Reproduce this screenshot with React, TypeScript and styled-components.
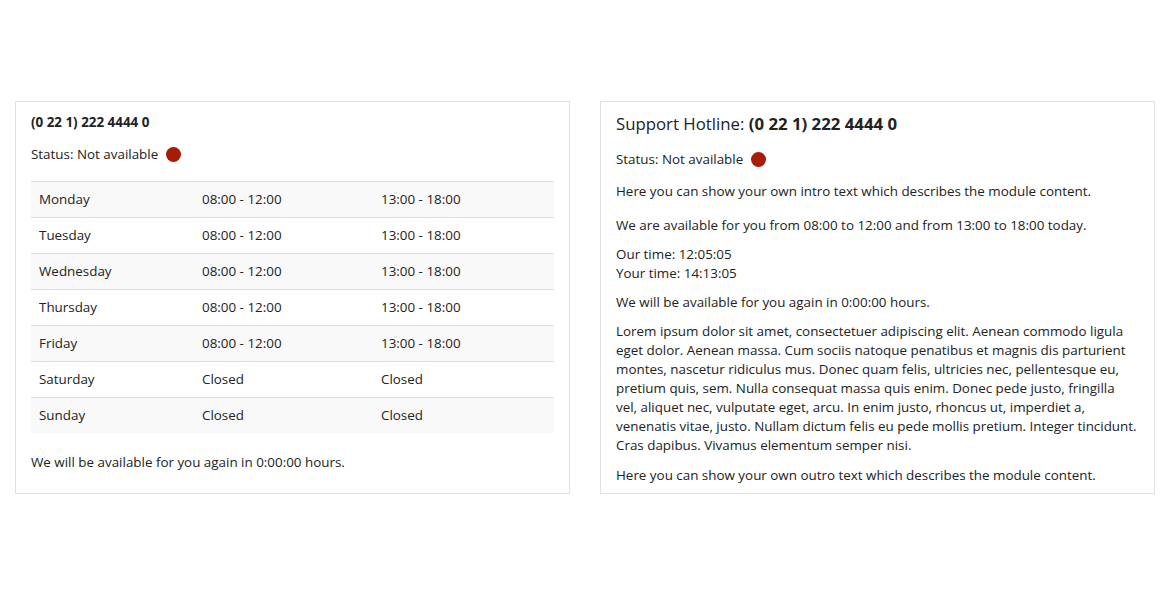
import React from "react";
import styled, { createGlobalStyle } from "styled-components";

const GlobalStyle = createGlobalStyle`
  body {
    margin: 0;
    background: #fff;
    font-family: "Open Sans", "Liberation Sans", sans-serif;
    font-size: 13.4px;
    line-height: 19px;
    color: #222;
  }
`;

const Page = styled.div`
  display: flex;
  align-items: stretch;
  gap: 30px;
  padding: 101px 15px 0;
`;

const Panel = styled.section`
  flex: 1;
  border: 1px solid #e1e1e1;
  padding: 11px 15px 8px;
`;

const Phone = styled.div`
  font-weight: 700;
  margin-bottom: 13px;
`;

const Title = styled.div`
  font-size: 16.8px;
  line-height: 22px;
  margin-bottom: 15px;

  strong {
    font-weight: 700;
  }
`;

const Status = styled.div<{ $gap: number }>`
  display: flex;
  align-items: center;
  margin-bottom: ${(p) => p.$gap}px;
`;

const Dot = styled.span`
  display: inline-block;
  width: 15px;
  height: 15px;
  border-radius: 50%;
  background: #a61c04;
  margin-left: 8px;
`;

const Hours = styled.table`
  width: 100%;
  border-collapse: collapse;
  margin-bottom: 20px;
`;

const Row = styled.tr<{ $striped: boolean }>`
  background: ${(p) => (p.$striped ? "#f9f9f9" : "transparent")};
  border-top: 1px solid #dddddd;
`;

const Cell = styled.td<{ $w?: number }>`
  height: 35px;
  padding: 0 8px;
  vertical-align: middle;
  ${(p) => (p.$w ? `width: ${p.$w}px;` : "")}
`;

const Text = styled.p<{ $gap?: number }>`
  margin: 0 0 ${(p) => p.$gap ?? 10}px;
`;

const days: [string, string, string][] = [
  ["Monday", "08:00 - 12:00", "13:00 - 18:00"],
  ["Tuesday", "08:00 - 12:00", "13:00 - 18:00"],
  ["Wednesday", "08:00 - 12:00", "13:00 - 18:00"],
  ["Thursday", "08:00 - 12:00", "13:00 - 18:00"],
  ["Friday", "08:00 - 12:00", "13:00 - 18:00"],
  ["Saturday", "Closed", "Closed"],
  ["Sunday", "Closed", "Closed"],
];

export default function App() {
  return (
    <>
      <GlobalStyle />
      <Page>
        <Panel>
          <Phone>(0 22 1) 222 4444 0</Phone>
          <Status $gap={17}>
            Status: Not available <Dot />
          </Status>
          <Hours>
            <tbody>
              {days.map(([day, am, pm], i) => (
                <Row key={day} $striped={i % 2 === 0}>
                  <Cell $w={147}>{day}</Cell>
                  <Cell $w={163}>{am}</Cell>
                  <Cell>{pm}</Cell>
                </Row>
              ))}
            </tbody>
          </Hours>
          <Text>We will be available for you again in 0:00:00 hours.</Text>
        </Panel>
        <Panel>
          <Title>
            Support Hotline: <strong>(0 22 1) 222 4444 0</strong>
          </Title>
          <Status $gap={13}>
            Status: Not available <Dot />
          </Status>
          <Text $gap={15}>
            Here you can show your own intro text which describes the module content.
          </Text>
          <Text>
            We are available for you from 08:00 to 12:00 and from 13:00 to 18:00 today.
          </Text>
          <Text>
            Our time: 12:05:05
            <br />
            Your time: 14:13:05
          </Text>
          <Text>We will be available for you again in 0:00:00 hours.</Text>
          <Text $gap={11}>
            Lorem ipsum dolor sit amet, consectetuer adipiscing elit. Aenean commodo ligula
            eget dolor. Aenean massa. Cum sociis natoque penatibus et magnis dis parturient
            montes, nascetur ridiculus mus. Donec quam felis, ultricies nec, pellentesque eu,
            pretium quis, sem. Nulla consequat massa quis enim. Donec pede justo, fringilla
            vel, aliquet nec, vulputate eget, arcu. In enim justo, rhoncus ut, imperdiet a,
            venenatis vitae, justo. Nullam dictum felis eu pede mollis pretium. Integer
            tincidunt. Cras dapibus. Vivamus elementum semper nisi.
          </Text>
          <Text $gap={0}>
            Here you can show your own outro text which describes the module content.
          </Text>
        </Panel>
      </Page>
    </>
  );
}
